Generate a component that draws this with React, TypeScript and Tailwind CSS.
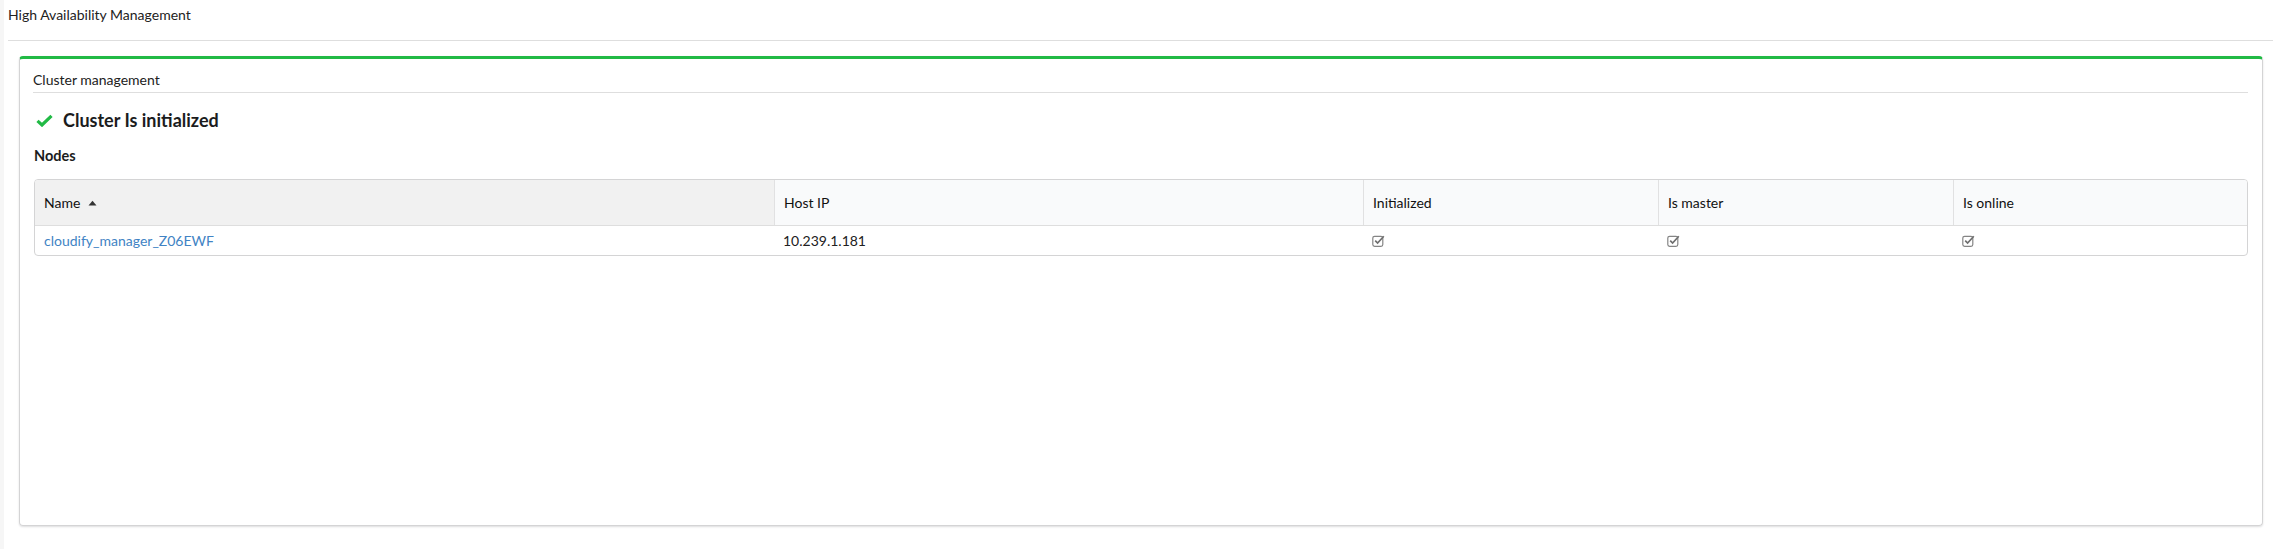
import { ReactNode } from 'react';

const font = { fontFamily: 'Lato, "Open Sans", "Liberation Sans", sans-serif' };

function CheckIcon() {
  return (
    <svg width="17" height="13" viewBox="0 0 17 13" className="shrink-0">
      <path d="M1.5 6.8 L6 11 L15.5 1.8" fill="none" stroke="#21ba45" strokeWidth="3.2" strokeLinejoin="miter" />
    </svg>
  );
}

function BoxCheck() {
  return (
    <svg width="13" height="13" viewBox="0 0 13 13">
      <rect x="0.8" y="2.3" width="10" height="10" rx="1.8" fill="none" stroke="#858585" strokeWidth="1.2" />
      <path d="M3.2 6.6 L5.6 9 L11.8 2.2" fill="none" stroke="#6f6f6f" strokeWidth="1.7" />
    </svg>
  );
}

function Th({ children, sorted, first }: { children: ReactNode; sorted?: boolean; first?: boolean }) {
  return (
    <div
      className={`flex items-center gap-2 px-[9px] h-[45px] text-[14px] text-[#111] ${
        sorted ? 'bg-[#f1f1f1]' : 'bg-[#f9fafb]'
      } ${first ? '' : 'border-l border-[#e1e1e2]'}`}
    >
      {children}
    </div>
  );
}

export default function App() {
  const cols = 'grid grid-cols-[739px_589px_295px_295px_1fr]';
  return (
    <div className="flex min-h-[549px] bg-white text-[#212121]" style={font}>
      <div className="w-[4px] bg-[#f6f6f6]" />
      <div className="flex-1 pl-[4px]">
        <div className="h-[41px] pt-[6px] border-b border-[#dedede]">
          <h1 className="text-[14px] leading-[18px] text-[#222]">High Availability Management</h1>
        </div>

        <div className="pt-[15px] pl-[11px] pr-[10px]">
          <div className="h-[470px] rounded-[4px] border border-[#d4d4d5] border-t-[3px] border-t-[#21ba45] shadow-[0_1px_2px_0_rgba(34,36,38,0.15)] px-[14px] pt-[11px]">
            <div className="text-[14px] leading-[20px] pb-[2px] border-b border-[#dedede] -ml-px">Cluster management</div>

            <div className="mt-[15px] flex items-center gap-[10px] pl-[2px] h-[24px]">
              <CheckIcon />
              <span className="text-[18px] font-bold leading-[24px] text-[#1b1c1d]">Cluster Is initialized</span>
            </div>

            <div className="mt-[14px] text-[14.5px] font-bold leading-[20px] text-[#1b1c1d]">Nodes</div>

            <div className="mt-[13px] rounded-[4px] border border-[#d4d4d5] overflow-hidden text-[14px]">
              <div className={`${cols} border-b border-[#dedede]`}>
                <Th sorted first>
                  Name
                  <svg width="9" height="6" viewBox="0 0 9 6">
                    <path d="M0.5 5.5 L4.5 0.8 L8.5 5.5 Z" fill="#333" />
                  </svg>
                </Th>
                <Th>Host IP</Th>
                <Th>Initialized</Th>
                <Th>Is master</Th>
                <Th>Is online</Th>
              </div>
              <div className={`${cols} h-[29px] items-center`}>
                <div className="px-[9px]">
                  <a href="#" className="text-[#4183c4]">cloudify_manager_Z06EWF</a>
                </div>
                <div className="px-[9px]">10.239.1.181</div>
                <div className="px-[9px] flex"><BoxCheck /></div>
                <div className="px-[9px] flex"><BoxCheck /></div>
                <div className="px-[9px] flex"><BoxCheck /></div>
              </div>
            </div>
          </div>
        </div>
      </div>
    </div>
  );
}
